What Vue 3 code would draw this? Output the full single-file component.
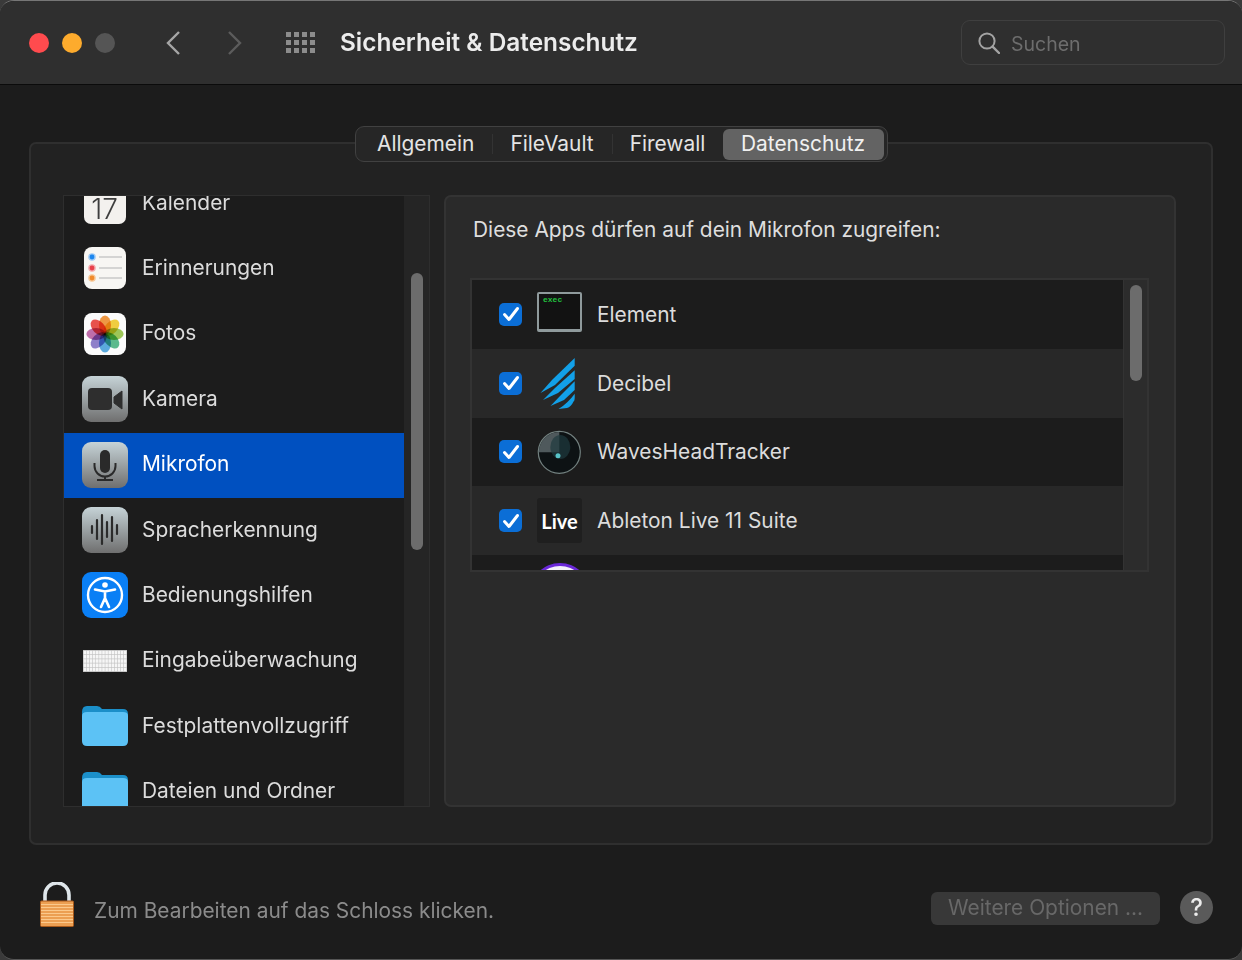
<template>
  <div class="window">
    <header class="titlebar">
      <div class="lights">
        <span class="light red"></span>
        <span class="light amber"></span>
        <span class="light off"></span>
      </div>
      <svg class="chevron back" width="16" height="26" viewBox="0 0 16 26">
        <path d="M14 2 L3 13 L14 24" fill="none" stroke="#a6a6a6" stroke-width="2.4" />
      </svg>
      <svg class="chevron forward" width="16" height="26" viewBox="0 0 16 26">
        <path d="M2 2 L13 13 L2 24" fill="none" stroke="#5c5c5c" stroke-width="2.4" />
      </svg>
      <div class="apps">
        <span v-for="n in 12" :key="n"></span>
      </div>
      <h1 class="title">Sicherheit &amp; Datenschutz</h1>
      <div class="search">
        <svg width="22" height="22" viewBox="0 0 22 22">
          <circle cx="9" cy="9" r="7.6" fill="none" stroke="#a3a3a3" stroke-width="2" />
          <path d="M14.6 14.6 L21 21" stroke="#a3a3a3" stroke-width="2.4" stroke-linecap="round" />
        </svg>
        <span class="search-text">Suchen</span>
      </div>
    </header>

    <main class="content">
      <section class="group">
        <nav class="tabs">
          <template v-for="(tab, i) in tabs" :key="tab.label">
            <span class="tab" :class="{ active: tab.active }">{{ tab.label }}</span>
            <span v-if="i < 2" class="tab-sep"></span>
          </template>
        </nav>

        <div class="sidebar">
          <ul class="service-list">
            <li
              v-for="item in services"
              :key="item.label"
              class="service"
              :class="{ selected: item.selected }"
            >
              <span class="service-icon">
                <!-- Kalender -->
                <svg v-if="item.icon === 'calendar'" width="44" height="44" viewBox="0 0 44 44">
                  <rect x="1" y="1" width="42" height="42" rx="7" fill="#f3f1ee" />
                  <text x="21.500" y="38" text-anchor="middle" class="cal-day">17</text>
                </svg>
                <!-- Erinnerungen -->
                <svg v-else-if="item.icon === 'reminders'" width="44" height="44" viewBox="0 0 44 44">
                  <rect x="1" y="1" width="42" height="42" rx="8" fill="#f7f6f3" />
                  <circle cx="9" cy="11" r="3.8" fill="#9cc9f5" />
                  <circle cx="9" cy="11" r="2.400" fill="#1c86ee" />
                  <circle cx="9" cy="22" r="3.8" fill="#f3a9ad" />
                  <circle cx="9" cy="22" r="2.400" fill="#e8414a" />
                  <circle cx="9" cy="32" r="3.8" fill="#f6c796" />
                  <circle cx="9" cy="32" r="2.400" fill="#f08a2c" />
                  <path d="M16 11 H39 M16 22 H39 M16 32 H39" stroke="#c9c9c9" stroke-width="1.4" />
                </svg>
                <!-- Fotos -->
                <svg v-else-if="item.icon === 'photos'" width="44" height="44" viewBox="0 0 44 44">
                  <rect x="1" y="1" width="42" height="42" rx="8" fill="#fbfbfb" />
                  <ellipse
                    v-for="petal in petals"
                    :key="petal.color"
                    class="petal"
                    cx="22"
                    cy="13"
                    rx="6"
                    ry="9.6"
                    :fill="petal.color"
                    fill-opacity="0.85"
                    :transform="`rotate(${petal.angle} 22 22)`"
                  />
                </svg>
                <!-- Kamera -->
                <svg v-else-if="item.icon === 'camera'" width="46" height="46" viewBox="0 0 46 46">
                  <rect width="46" height="46" rx="9" fill="url(#greyFill)" />
                  <rect x="6" y="12" width="24" height="22" rx="4" fill="#2e2e2e" />
                  <path d="M32 21 L40 15 V33 L32 27 Z" fill="#2e2e2e" stroke="#2e2e2e" stroke-linejoin="round" />
                </svg>
                <!-- Mikrofon -->
                <svg v-else-if="item.icon === 'mic'" width="46" height="46" viewBox="0 0 46 46">
                  <rect width="46" height="46" rx="9" fill="url(#greyFill)" />
                  <rect x="18" y="8" width="10" height="23" rx="5" fill="#2a2a2a" />
                  <path d="M12.500 21 V24 A10.500 10.500 0 0 0 33.500 24 V21 M23 34.500 V38 M15 38 H31" fill="none" stroke="#2a2a2a" stroke-width="2" />
                </svg>
                <!-- Spracherkennung -->
                <svg v-else-if="item.icon === 'speech'" width="46" height="46" viewBox="0 0 46 46">
                  <rect width="46" height="46" rx="9" fill="url(#greyFill)" />
                  <path d="M10 19 V26 M15 13 V32 M20 8 V37 M25 15 V30 M30 10 V34 M35 18 V27" stroke="#2b2b2b" stroke-width="2.200" stroke-linecap="round" />
                </svg>
                <!-- Bedienungshilfen -->
                <svg v-else-if="item.icon === 'access'" width="46" height="46" viewBox="0 0 46 46">
                  <rect width="46" height="46" rx="9" fill="#0a7ff5" />
                  <circle cx="23" cy="23" r="17" fill="none" stroke="#fff" stroke-width="2.4" />
                  <circle cx="23" cy="13" r="2.8" fill="#fff" />
                  <path d="M13 17.500 L23 19.500 L33 17.500 M23 19.500 V26 M23 26 L19 35 M23 26 L27 35" fill="none" stroke="#fff" stroke-width="2.6" stroke-linecap="round" />
                </svg>
                <!-- Eingabeüberwachung -->
                <svg v-else-if="item.icon === 'keyboard'" width="44" height="22" viewBox="0 0 44 22">
                  <rect width="44" height="22" fill="#bdbdbd" />
                  <g v-for="row in 5" :key="row">
                    <rect
                      v-for="col in 14"
                      :key="col"
                      :x="0.600 + (col - 1) * 3.100"
                      :y="0.800 + (row - 1) * 4.200"
                      width="2.600"
                      height="3.600"
                      fill="#f6f6f6"
                    />
                  </g>
                </svg>
                <!-- Ordner -->
                <svg v-else width="46" height="40" viewBox="0 0 46 40">
                  <path d="M0 6 Q0 0 5 0 H15 Q18 0 20 3 H41 Q46 3 46 8 V20 H0 Z" fill="#1b8fc9" />
                  <path d="M0 10 Q0 6 5 6 H41 Q46 6 46 10 V35 Q46 40 41 40 H5 Q0 40 0 35 Z" fill="#5cc2f5" />
                </svg>
              </span>
              <span class="service-label">{{ item.label }}</span>
            </li>
          </ul>
          <div class="sidebar-scroll"><span class="sidebar-thumb"></span></div>
        </div>

        <div class="detail">
          <p class="detail-title">Diese Apps dürfen auf dein Mikrofon zugreifen:</p>
          <div class="apps-table">
            <ul class="app-list">
              <li v-for="app in appRows" :key="app.id" class="app-row">
                <span v-if="app.name" class="check">
                  <svg width="18" height="16" viewBox="0 0 18 16">
                    <path d="M2.500 8.500 L7 13.500 L15.500 2.500" fill="none" stroke="#fff" stroke-width="3" stroke-linecap="round" stroke-linejoin="round" />
                  </svg>
                </span>
                <span v-else class="check blank"></span>
                <span class="app-icon">
                  <!-- Element -->
                  <span v-if="app.id === 'element'" class="exec"><span class="exec-text">exec</span></span>
                  <!-- Decibel -->
                  <svg v-else-if="app.id === 'decibel'" class="overflowing" width="45" height="45" viewBox="0 0 45 45">
                    <path d="M3.500 32 L15 19 L37.700 -3 V4.700 L18 24 Z" fill="#12a0e8" />
                    <path d="M6 39 L18 27 L37.700 9.300 V18 L21 32 Z" fill="#12a0e8" />
                    <path d="M13.500 45 L24 34 L37.700 20.300 V29 L27 39 Z" fill="#12a0e8" />
                    <path d="M21.500 48 Q31 42 37.700 32.700 Q38 40 36.700 40.300 Q34 46 30 47 Z" fill="#12a0e8" />
                  </svg>
                  <!-- WavesHeadTracker -->
                  <svg v-else-if="app.id === 'waves'" width="45" height="45" viewBox="0 0 45 45">
                    <circle cx="22.300" cy="23.300" r="21" fill="#0d1214" stroke="#72807f" stroke-width="1.200" />
                    <path d="M22.300 2.900 A20.400 20.400 0 0 0 1.900 23.300 H22.300 Z" fill="#4f595c" />
                    <ellipse cx="23.300" cy="18" rx="10" ry="12" fill="#1f3a3f" fill-opacity="0.7" />
                    <circle cx="21" cy="26.700" r="2.500" fill="#58c3c8" />
                  </svg>
                  <!-- Ableton -->
                  <span v-else-if="app.id === 'live'" class="live">Live</span>
                  <!-- abgeschnitten -->
                  <svg v-else class="overflowing" width="45" height="45" viewBox="0 0 45 45">
                    <circle cx="23" cy="26" r="30" fill="#6b28d9" />
                    <circle cx="23" cy="26" r="27" fill="#f4f0fb" />
                  </svg>
                </span>
                <span class="app-name">{{ app.name }}</span>
              </li>
            </ul>
            <div class="table-scroll"><span class="table-thumb"></span></div>
          </div>
        </div>
      </section>
    </main>

    <footer class="footer">
      <svg class="lock" width="34" height="45" viewBox="0 0 34 45">
        <path d="M5 20 V13 A12 12 0 0 1 29 13 V20" fill="none" stroke="#dfe6ea" stroke-width="3.600" />
        <rect x="0.500" y="19" width="33" height="25.500" rx="1" fill="#ec9f52" stroke="#a8591a" stroke-width="1" />
        <path d="M1 22.500 H33 M1 25.500 H33 M1 28.500 H33 M1 31.500 H33 M1 34.500 H33 M1 37.500 H33 M1 40.500 H33" stroke="#fbc98c" stroke-width="1" />
      </svg>
      <span class="lock-text">Zum Bearbeiten auf das Schloss klicken.</span>
      <span class="more-btn">Weitere Optionen ...</span>
      <span class="help">?</span>
    </footer>

    <svg width="0" height="0" class="defs">
      <defs>
        <linearGradient id="greyFill" x1="0" y1="0" x2="0" y2="1">
          <stop offset="0" stop-color="#c6d3d7" />
          <stop offset="1" stop-color="#6f6f6f" />
        </linearGradient>
      </defs>
    </svg>
  </div>
</template>

<script setup>
const tabs = [
  { label: 'Allgemein' },
  { label: 'FileVault' },
  { label: 'Firewall' },
  { label: 'Datenschutz', active: true },
]

const services = [
  { label: 'Kalender', icon: 'calendar' },
  { label: 'Erinnerungen', icon: 'reminders' },
  { label: 'Fotos', icon: 'photos' },
  { label: 'Kamera', icon: 'camera' },
  { label: 'Mikrofon', icon: 'mic', selected: true },
  { label: 'Spracherkennung', icon: 'speech' },
  { label: 'Bedienungshilfen', icon: 'access' },
  { label: 'Eingabeüberwachung', icon: 'keyboard' },
  { label: 'Festplattenvollzugriff', icon: 'folder' },
  { label: 'Dateien und Ordner', icon: 'folder' },
]

// Blütenblätter des Fotos-Icons
const petals = [
  { angle: 0, color: '#f08a24' },
  { angle: 45, color: '#f2c91f' },
  { angle: 90, color: '#8fc03c' },
  { angle: 135, color: '#3fb07a' },
  { angle: 180, color: '#3f9fdc' },
  { angle: 225, color: '#7d6cc4' },
  { angle: 270, color: '#b6579f' },
  { angle: 315, color: '#e8352e' },
]

const appRows = [
  { id: 'element', name: 'Element' },
  { id: 'decibel', name: 'Decibel' },
  { id: 'waves', name: 'WavesHeadTracker' },
  { id: 'live', name: 'Ableton Live 11 Suite' },
  { id: 'next', name: '' },
]
</script>

<style>
html,
body {
  background: #3a3a3a;
}
</style>

<style scoped>
.window {
  width: 1242px;
  height: 960px;
  box-sizing: border-box;
  display: flex;
  flex-direction: column;
  overflow: hidden;
  background: #1c1c1c;
  border-radius: 14px;
  border-top: 1px solid #767676;
  border-bottom: 1px solid #555;
  font-family: Inter, "Liberation Sans", sans-serif;
  color: #dcdcdc;
  font-size: 20.9px;
}

.defs {
  position: absolute;
}

/* Titelleiste */
.titlebar {
  flex: 0 0 84px;
  box-sizing: border-box;
  display: flex;
  align-items: center;
  padding: 0 17px 0 29px;
  background: #2f2f2f;
  border-bottom: 1px solid #0b0b0b;
}

.lights {
  display: flex;
  gap: 13px;
}

.light {
  width: 20px;
  height: 20px;
  border-radius: 50%;
}

.red {
  background: #ff4b4e;
}
.amber {
  background: #fdab2d;
}
.off {
  background: #555;
}

.chevron.back {
  margin-left: 50px;
}
.chevron.forward {
  margin-left: 46px;
}

.apps {
  display: grid;
  grid-template-columns: repeat(4, 5px);
  grid-auto-rows: 5px;
  gap: 3px 3px;
  margin-left: 43px;
}

.apps span {
  background: #8c8c8c;
}

.title {
  margin: 0 0 2px 25px;
  font-size: 24.4px;
  font-weight: 600;
  color: #ececec;
  white-space: nowrap;
}

.search {
  margin-left: auto;
  width: 264px;
  height: 45px;
  box-sizing: border-box;
  display: flex;
  align-items: center;
  gap: 11px;
  padding-left: 16px;
  border: 1px solid #3f3f3f;
  border-radius: 9px;
  color: #6d6d6d;
  font-size: 19.5px;
}

.search-text {
  margin-top: 2px;
}

/* Gruppenrahmen */
.content {
  flex: 1;
  padding: 57px 29px 0;
}

.group {
  position: relative;
  height: 703px;
  box-sizing: border-box;
  display: flex;
  gap: 14px;
  padding: 51px 35px 36px 32px;
  background: #222;
  border: 2px solid #2f2f2f;
  border-radius: 7px;
}

.tabs {
  position: absolute;
  top: -18px;
  left: 324px;
  width: 533px;
  height: 36px;
  box-sizing: border-box;
  display: flex;
  align-items: center;
  padding: 0 3px 0 21px;
  background: #262626;
  border: 1px solid #414141;
  border-radius: 9px;
}

.tab {
  padding: 2px 0 4px;
  line-height: 25px;
  color: #e4e4e4;
}

.tab-sep {
  width: 1px;
  height: 20px;
  margin: 0 17px 0 18px;
  background: #333;
}

.tab.active {
  margin-left: auto;
  padding: 2px 19px 4px 18px;
  background: #636363;
  border-radius: 6px;
  color: #f0f0f0;
}

/* Liste links */
.sidebar {
  flex: 0 0 367px;
  box-sizing: border-box;
  display: flex;
  overflow: hidden;
  background: #252525;
  border: 1px solid #2e2e2e;
}

.service-list {
  flex: 0 0 340px;
  margin: -24.6px 0 0;
  padding: 0;
  list-style: none;
  background: #1c1c1c;
}

.service {
  height: 65.4px;
  box-sizing: border-box;
  display: flex;
  align-items: center;
  gap: 14px;
  padding: 0 0 2px 18px;
}

.service.selected {
  background: #0050c0;
  color: #fff;
}

.service-icon {
  width: 46px;
  display: flex;
  justify-content: center;
}

.service-label {
  padding-bottom: 2px;
}

.petal {
  mix-blend-mode: multiply;
}

.cal-day {
  font-size: 28px;
  font-weight: 300;
  fill: #3e3e3e;
}

.sidebar-scroll {
  flex: 1;
  padding: 77px 0 0 7px;
}

.sidebar-thumb {
  display: block;
  width: 12px;
  height: 277px;
  border-radius: 6px;
  background: #6c6c6c;
}

/* Bereich rechts */
.detail {
  flex: 1;
  box-sizing: border-box;
  padding: 19px 25px 0 24px;
  background: #2a2a2a;
  border: 2px solid #333;
  border-radius: 7px;
}

.detail-title {
  margin: 0 0 35px 3px;
  line-height: 27px;
  color: #dedede;
}

.apps-table {
  height: 294px;
  display: flex;
  overflow: hidden;
  border: 2px solid #333;
  box-sizing: border-box;
}

.app-list {
  flex: 1;
  margin: 0;
  padding: 0;
  list-style: none;
}

.app-row {
  height: 68.8px;
  display: flex;
  align-items: center;
  padding-left: 27px;
  background: #1c1c1c;
}

.app-row:nth-child(even) {
  background: #282828;
}

.check {
  width: 23px;
  height: 23px;
  display: flex;
  align-items: center;
  justify-content: center;
  border-radius: 5px;
  background: #0b6ed6;
}

.check.blank {
  visibility: hidden;
}

.app-icon {
  width: 45px;
  height: 45px;
  margin-left: 15px;
  display: block;
  flex: none;
}

.overflowing {
  overflow: visible;
}

.exec {
  display: block;
  height: 40px;
  box-sizing: border-box;
  background: #121212;
  border: 2px solid #8f9a9c;
  border-bottom-width: 3px;
  border-radius: 2px;
}

.exec-text {
  display: block;
  margin: 1px 0 0 4px;
  font-family: "Liberation Mono", monospace;
  font-size: 8px;
  line-height: 9px;
  font-weight: 700;
  color: #22c23f;
}

.live {
  display: flex;
  height: 45px;
  align-items: center;
  justify-content: center;
  background: #1f1f1f;
  border-radius: 3px;
  color: #fff;
  font-family: Lato, "Liberation Sans", sans-serif;
  font-size: 20px;
  font-weight: 700;
}

.app-name {
  margin-left: 15px;
}

.table-scroll {
  flex: 0 0 24px;
  box-sizing: border-box;
  padding: 5px 0 0 6px;
  background: #2c2c2c;
  border-left: 1px solid #333;
}

.table-thumb {
  display: block;
  width: 12px;
  height: 96px;
  border-radius: 6px;
  background: #6c6c6c;
}

/* Fußzeile */
.footer {
  flex: 1;
  display: flex;
  align-items: center;
  padding: 10px 29px 0 40px;
}

.lock {
  margin-top: -6px;
}

.lock-text {
  margin: 6px 0 0 20px;
  color: #8b8b8b;
}

.more-btn {
  margin: 2px 0 0 auto;
  width: 229px;
  height: 33px;
  box-sizing: border-box;
  padding-left: 17px;
  line-height: 31px;
  background: #383838;
  border-radius: 6px;
  color: #686868;
}

.help {
  width: 33px;
  height: 33px;
  margin-left: 20px;
  display: flex;
  align-items: center;
  justify-content: center;
  border-radius: 50%;
  background: #5a5a5a;
  color: #ececec;
  font-size: 24px;
  font-weight: 500;
}
</style>
